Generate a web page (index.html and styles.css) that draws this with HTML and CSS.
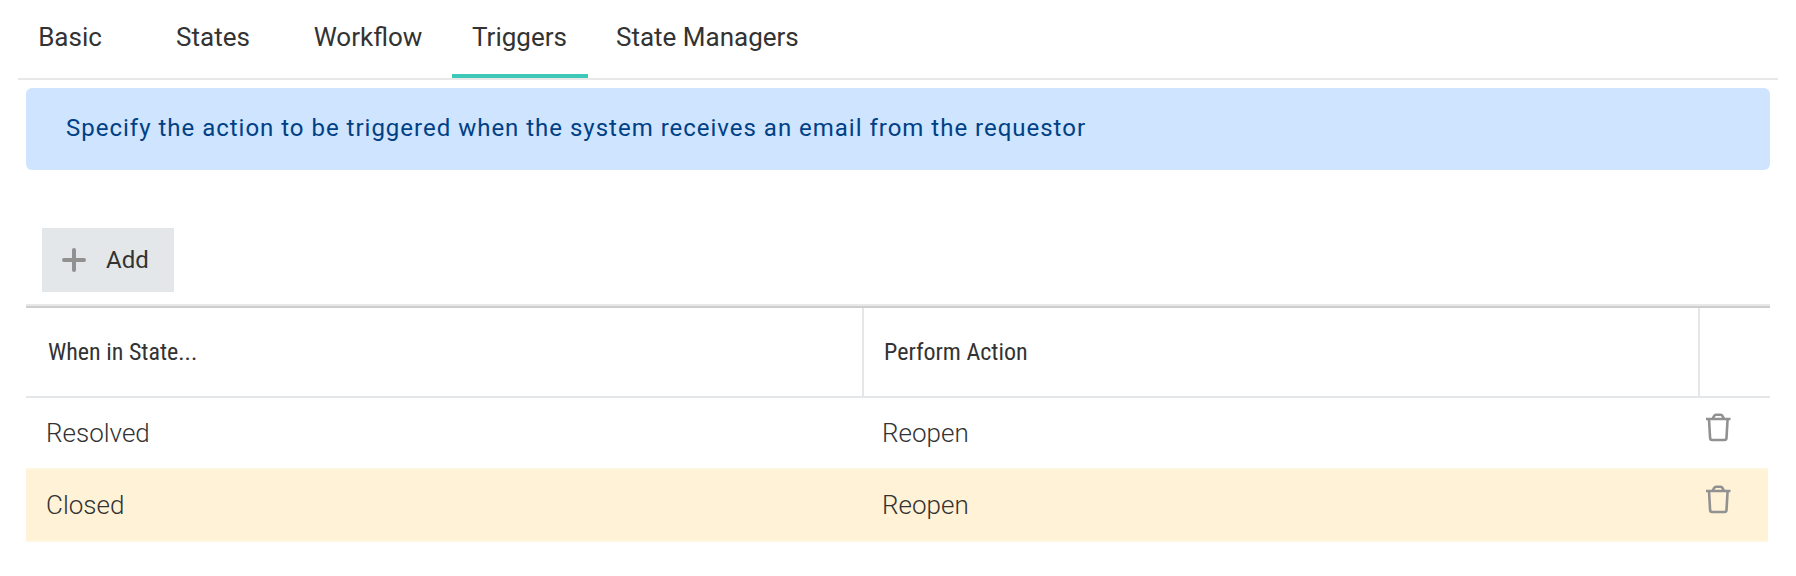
FILE: index.html
```
<!DOCTYPE html>
<html lang="en">

<head>
    <meta charset="UTF-8" />
    <meta name="viewport" content="width=device-width, initial-scale=1.0" />
    <title>Triggers</title>
    <link rel="stylesheet" href="styles.css">
</head>

<body>

    <nav class="tabs">
        <a class="tab">Basic</a>
        <a class="tab">States</a>
        <a class="tab tab-wide">Workflow</a>
        <a class="tab active">Triggers</a>
        <a class="tab">State Managers</a>
    </nav>

    <main class="content">
        <div class="info">Specify the action to be triggered when the system receives an email from the requestor</div>

        <button class="add" type="button">
            <svg width="24" height="24" viewBox="0 0 24 24">
                <path d="M12 2v20M2 12h20" />
            </svg>
            <span>Add</span>
        </button>

        <div class="grid">
            <div class="row head">
                <div class="cell">When in State...</div>
                <div class="cell">Perform Action</div>
                <div class="cell"></div>
            </div>
            <div class="row">
                <div class="cell">Resolved</div>
                <div class="cell">Reopen</div>
                <div class="cell tools">
                    <svg class="trash" width="26" height="30" viewBox="0 0 26 30">
                        <path d="M0 7h24.5M3 7l1.1 19q.1 2 2.1 2h12.2q2 0 2.1-2l1.1-19M6.6 6.8l1.4-2.6q.7-1.4 2.1-1.4h4.4q1.4 0 2.1 1.4l1.4 2.6" />
                    </svg>
                </div>
            </div>
            <div class="row selected">
                <div class="cell">Closed</div>
                <div class="cell">Reopen</div>
                <div class="cell tools">
                    <svg class="trash" width="26" height="30" viewBox="0 0 26 30">
                        <path d="M0 7h24.5M3 7l1.1 19q.1 2 2.1 2h12.2q2 0 2.1-2l1.1-19M6.6 6.8l1.4-2.6q.7-1.4 2.1-1.4h4.4q1.4 0 2.1 1.4l1.4 2.6" />
                    </svg>
                </div>
            </div>
        </div>
    </main>

</body>

</html>
```
FILE: styles.css
```
* {
    box-sizing: border-box;
}

body {
    margin: 0;
    background: #fff;
    color: #333;
    font-family: Roboto, "Liberation Sans", sans-serif;
    font-size: 26px;
}

/* tabs */
.tabs {
    display: flex;
    gap: 8px;
    height: 80px;
    margin: 0 18px;
    border-bottom: 2px solid #e8e8e8;
}

.tab {
    flex: none;
    min-width: 134px;
    height: 78px;
    padding: 0 20px;
    line-height: 74px;
    text-align: center;
    border-bottom: 4px solid transparent;
}

.tab:first-child {
    min-width: 136px;
    margin-left: -16px;
}

.tab-wide {
    width: 156px;
    padding-left: 24px;
}

.tab.active {
    width: 136px;
    padding-right: 21px;
    border-color: #3dc8b8;
}

/* content */
.content {
    padding: 8px 26px 0;
}

.info {
    height: 82px;
    padding-left: 40px;
    border-radius: 6px;
    background: #cee4ff;
    color: #004085;
    font-size: 24px;
    letter-spacing: 0.99px;
    line-height: 80px;
}

.add {
    display: flex;
    align-items: center;
    gap: 20px;
    width: 132px;
    height: 64px;
    margin: 58px 0 12px 16px;
    padding: 0 0 0 20px;
    border: 0;
    background: #e3e7ea;
    color: #333;
    font-family: inherit;
    font-size: 24px;
}

.add svg {
    stroke: #919191;
    stroke-width: 4;
    stroke-linecap: round;
}

/* grid */
.grid {
    border-top: 2px solid #e8e8e8;
}

.row {
    display: grid;
    grid-template-columns: 836px 836px 1fr;
    height: 72px;
    margin-right: 2px;
    font-weight: 300;
    line-height: 70px;
}

.cell {
    padding-left: 20px;
}

.head {
    height: 92px;
    margin-right: 0;
    border-top: 2px solid #cecece;
    border-bottom: 2px solid #e3e7ea;
    font-family: "Roboto Condensed", Roboto, sans-serif;
    font-size: 24px;
    font-stretch: 75%;
    font-weight: 400;
    line-height: 88px;
}

.head .cell {
    padding-left: 22px;
}

.head .cell + .cell {
    padding-left: 20px;
    border-left: 2px solid #e3e7ea;
}

.selected {
    height: 74px;
    margin-top: -2px;
    border: solid #fef6df;
    border-width: 2px 0;
    background: #fff2d6;
}

.tools {
    padding: 14px 0 0 8px;
    line-height: 0;
}

.trash {
    fill: none;
    stroke: #919191;
    stroke-width: 2.6;
}
```
